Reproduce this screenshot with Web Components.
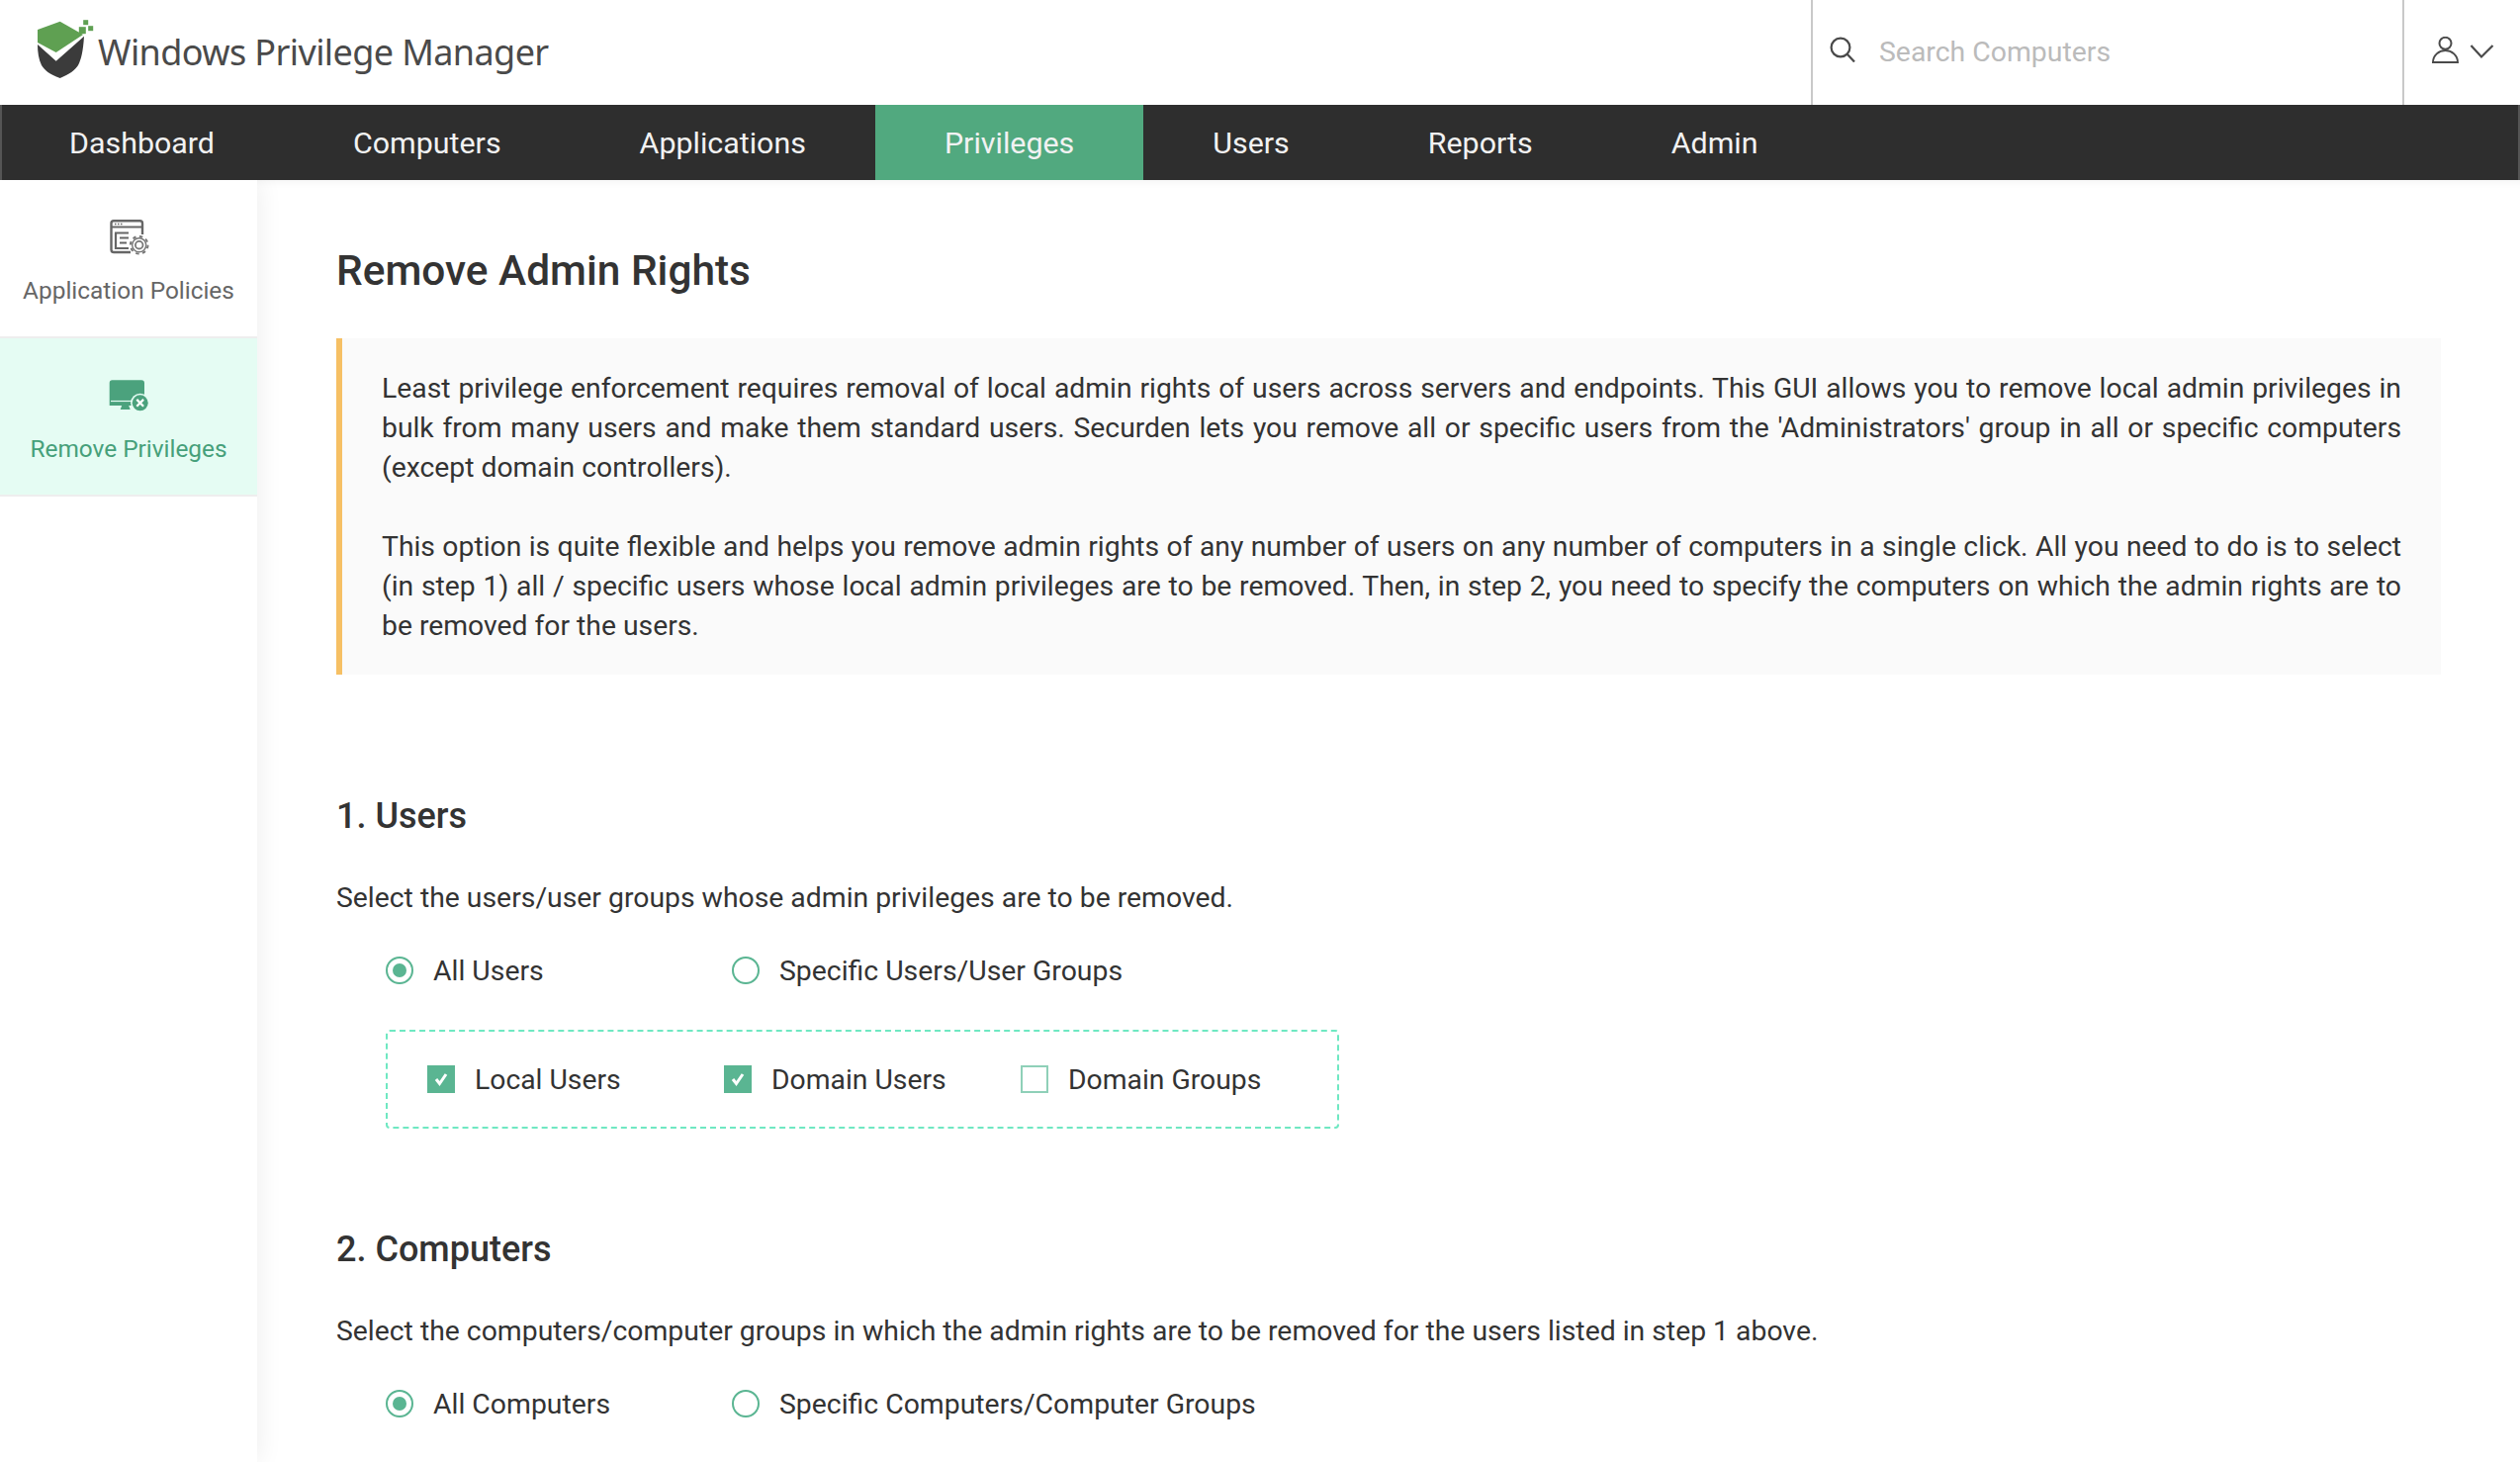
<!DOCTYPE html>
<html>
<head>
<meta charset="utf-8">
<title>Windows Privilege Manager</title>
<style>
  html, body { margin:0; padding:0; background:#fff; }
  body { width:2548px; height:1478px; overflow:hidden; font-family:Roboto,sans-serif; color:#333; }
</style>
</head>
<body>
<wpm-app></wpm-app>
<script>
(function () {
  const GREEN = '#5ab592', LINE = '#c9c9c9';

  function define(name, css, html, init) {
    class Comp extends HTMLElement {
      connectedCallback() {
        if (this.shadowRoot) return;
        const root = this.attachShadow({ mode: 'open' });
        root.innerHTML = `<style>${css}</style>${typeof html === 'function' ? html(this) : html}`;
        if (init) init(root, this);
      }
    }
    customElements.define(name, Comp);
  }

  // top bar: logo, search box, user menu
  define('wpm-header', `
    :host { display:flex; height:106px; background:#fff; align-items:stretch; }
    .logo { flex:1; display:flex; align-items:center; padding-left:37px; }
    .logo svg { width:58px; height:62px; margin-top:-4px; }
    .name { font:400 36px "Noto Sans",sans-serif; color:#4a4a4a; margin-left:4px; letter-spacing:-.6px; margin-top:-2px; }
    .search { width:600px; box-sizing:border-box; border-left:2px solid ${LINE}; border-right:2px solid ${LINE}; display:flex; align-items:center; padding-left:17px; }
    .search svg { width:26px; height:26px; margin-top:-7px; }
    .search span { font:400 28.4px Roboto,sans-serif; color:#bbb; margin-left:24px; margin-top:-2px; }
    .user { width:117px; display:flex; align-items:center; padding-left:28px; box-sizing:border-box; }
    .user svg { display:block; flex:none; }
  `, `
    <div class="logo">
      <svg viewBox="37 20 58 62">
        <path d="M38 30L60.7 21.7L84 35L56.7 53L38 43Z" fill="#5fa052"/>
        <path d="M38 45L56.7 61.7L85 36.7C84 52 82 60 79 66C76 71 70 75 60.7 79C50 75 45 71 42 66C39 60 38 52 38 45Z" fill="#3b3b3b"/>
        <rect x="79.8" y="27.2" width="7" height="7" fill="#5fa052"/>
        <rect x="84.2" y="20.2" width="5" height="5" fill="#5fa052"/>
        <rect x="89.2" y="26.2" width="5" height="5" fill="#5fa052"/>
      </svg>
      <span class="name">Windows Privilege Manager</span>
    </div>
    <div class="search">
      <svg viewBox="0 0 26 26" fill="none" stroke="#4a4a4a" stroke-width="2.2"><circle cx="11" cy="11" r="9.4"/><path d="M17.5 17.5l7.5 8"/></svg>
      <span>Search Computers</span>
    </div>
    <div class="user">
      <svg style="margin-top:-4px" width="28" height="28" viewBox="0 0 28 28" fill="none" stroke="#4a4a4a" stroke-width="2"><circle cx="13.5" cy="6.8" r="6"/><path d="M1 26C1 19 7 14 13.5 14S26 19 26 26Z"/></svg>
      <svg style="margin:-2px 0 0 10px" width="26" height="16" viewBox="0 0 26 16" fill="none" stroke="#4a4a4a" stroke-width="2.2"><path d="M1.5 2L12 13.5L23.5 2"/></svg>
    </div>
  `);

  define('wpm-nav', `
    :host { display:flex; height:76px; background:#2e2e2e; box-shadow:inset 2px 0 #555, inset -2px 0 #555; position:relative; z-index:2; }
    ::slotted(a) { display:flex; align-items:center; padding:0 70px; color:#f2f2f2; font:400 30.4px Roboto,sans-serif; }
    ::slotted(a.on) { background:#51a97f; }
  `, `<slot></slot>`);

  // one sidebar tile: icon slot over a label
  define('wpm-side-item', `
    :host { display:flex; flex-direction:column; align-items:center; height:160px; box-sizing:border-box; border-bottom:2px solid #eee; color:#666; font:400 24.4px Roboto,sans-serif; padding-top:40px; }
    :host([active]) { background:#e5fcf3; color:#46a07a; }
    ::slotted(svg) { display:block; width:42px; height:42px; margin-bottom:15px; }
  `, `<slot name="icon"></slot><span><slot></slot></span>`);

  define('wpm-sidebar', `
    :host { display:block; width:260px; flex:none; background:#fff; box-shadow:2px 0 24px rgba(0,0,0,.07); position:relative; }
  `, `<slot></slot>`);

  define('wpm-note', `
    :host { display:block; background:#fafafa; border-left:6px solid #f6c064; padding:31px 40px 29px 40px; font:400 28.3px/40px Roboto,sans-serif; color:#333; text-align:justify; }
    ::slotted(p) { margin:0 0 40px; }
    ::slotted(p:last-child) { margin:0; }
  `, `<slot></slot>`);

  define('wpm-radio', `
    :host { display:inline-flex; align-items:center; font:400 28.38px Roboto,sans-serif; color:#333; }
    i { width:28px; height:28px; box-sizing:border-box; border:2px solid ${GREEN}; border-radius:50%; display:flex; align-items:center; justify-content:center; margin-right:20px; }
    :host([checked]) i::after { content:''; width:14px; height:14px; background:${GREEN}; border-radius:50%; }
  `, `<i></i><slot></slot>`);

  define('wpm-check', `
    :host { display:inline-flex; align-items:center; font:400 28.3px Roboto,sans-serif; color:#333; }
    i { width:28px; height:28px; box-sizing:border-box; border:2px solid #8fd0b8; display:flex; align-items:center; justify-content:center; margin-right:20px; }
    svg { display:none; width:16px; height:16px; }
    :host([checked]) i { background:${GREEN}; border-color:${GREEN}; }
    :host([checked]) svg { display:block; }
  `, `<i><svg viewBox="0 0 16 16" fill="none" stroke="#fff" stroke-width="3"><path d="M3 8l3.5 4.5L13 3"/></svg></i><slot></slot>`);

  define('wpm-section', `
    :host { display:block; }
    h2 { margin:0; font:500 36px/44px Roboto,sans-serif; color:#333; }
    p { margin:41px 0 0; font:400 28.35px/40px Roboto,sans-serif; color:#333; }
    .opts { display:grid; grid-template-columns:350px auto; justify-content:start; align-items:center; margin:33px 0 0 50px; height:40px; }
  `, (h) => `
    <h2>${h.getAttribute('heading')}</h2>
    <p>${h.getAttribute('text')}</p>
    <div class="opts"><slot name="opts"></slot></div>
    <slot></slot>
  `);

  define('wpm-filter', `
    :host { display:grid; grid-template-columns:300px 300px auto; align-items:center; width:964px; height:100px; box-sizing:border-box; border:2px dashed #6fe8c2; border-radius:4px; margin:40px 0 0 50px; padding-left:40px; }
  `, `<slot></slot>`);

  define('wpm-app', `
    :host { display:block; }
    .body { display:flex; height:1296px; }
    main { flex:1; padding:60px 80px 0 80px; min-width:0; box-shadow:inset 0 12px 12px -12px rgba(0,0,0,.06); }
    h1 { margin:0 0 36px; font:500 42.4px/64px Roboto,sans-serif; color:#333; }
    wpm-section { margin-top:121px; }
    wpm-section + wpm-section { margin-top:100px; }
  `, `
    <wpm-header></wpm-header>
    <wpm-nav>
      <a>Dashboard</a><a>Computers</a><a>Applications</a><a class="on">Privileges</a><a>Users</a><a>Reports</a><a>Admin</a>
    </wpm-nav>
    <div class="body">
      <wpm-sidebar>
        <wpm-side-item>
          <svg slot="icon" viewBox="0 0 42 42" fill="none" stroke="#666">
            <path d="M23 33H6a2.5 2.5 0 0 1-2.5-2.5V3.7A2.5 2.5 0 0 1 6 1.2H32.500a2.500 2.500 0 0 1 2.500 2.500V15" stroke-width="2.4"/>
            <path d="M3.500 7.500H35" stroke-width="2"/>
            <path d="M7 4.500h1.500M10 4.500h1.500M13 4.500h1.500" stroke-width="1.300"/>
            <path d="M7 13.500H21M8 13.500V29H21M12 18.500H21M12 23.500H19" stroke-width="2.200"/>
            <circle cx="31.700" cy="25.700" r="8.800" stroke="#777" stroke-width="2" stroke-dasharray="3.450 3.450"/>
            <circle cx="31.700" cy="25.700" r="7" fill="#fff" stroke="#777" stroke-width="1.400"/>
            <circle cx="31.700" cy="25.700" r="3.800" stroke="#777" stroke-width="1.800"/>
          </svg>
          Application Policies
        </wpm-side-item>
        <wpm-side-item active>
          <svg slot="icon" viewBox="0 0 42 42">
            <path d="M4.500 2.300H34a3 3 0 0 1 3 3V28H1.700V5.300a3 3 0 0 1 2.800-3z" fill="#4ba27d"/>
            <path d="M3 23.500H26" stroke="#e5fcf3" stroke-width="1.200"/>
            <path d="M12.700 32l1.500-4h7l1.500 4z" fill="#4ba27d"/>
            <circle cx="32.700" cy="25.300" r="9.600" fill="#e5fcf3"/>
            <circle cx="32.700" cy="25.300" r="8" fill="#4ba27d"/>
            <path d="M29.300 21.900l6.800 6.800M36.100 21.900l-6.800 6.800" stroke="#fff" stroke-width="2.200"/>
          </svg>
          Remove Privileges
        </wpm-side-item>
      </wpm-sidebar>
      <main>
        <h1>Remove Admin Rights</h1>
        <wpm-note>
          <p>Least privilege enforcement requires removal of local admin rights of users across servers and endpoints. This GUI allows you to remove local admin privileges in bulk from many users and make them standard users. Securden lets you remove all or specific users from the 'Administrators' group in all or specific computers (except domain controllers).</p>
          <p>This option is quite flexible and helps you remove admin rights of any number of users on any number of computers in a single click. All you need to do is to select (in step 1) all / specific users whose local admin privileges are to be removed. Then, in step 2, you need to specify the computers on which the admin rights are to be removed for the users.</p>
        </wpm-note>
        <wpm-section heading="1. Users" text="Select the users/user groups whose admin privileges are to be removed.">
          <wpm-radio slot="opts" checked>All Users</wpm-radio>
          <wpm-radio slot="opts">Specific Users/User Groups</wpm-radio>
          <wpm-filter>
            <wpm-check checked>Local Users</wpm-check>
            <wpm-check checked>Domain Users</wpm-check>
            <wpm-check>Domain Groups</wpm-check>
          </wpm-filter>
        </wpm-section>
        <wpm-section heading="2. Computers" text="Select the computers/computer groups in which the admin rights are to be removed for the users listed in step 1 above.">
          <wpm-radio slot="opts" checked>All Computers</wpm-radio>
          <wpm-radio slot="opts">Specific Computers/Computer Groups</wpm-radio>
        </wpm-section>
      </main>
    </div>
  `);
})();
</script>
</body>
</html>
